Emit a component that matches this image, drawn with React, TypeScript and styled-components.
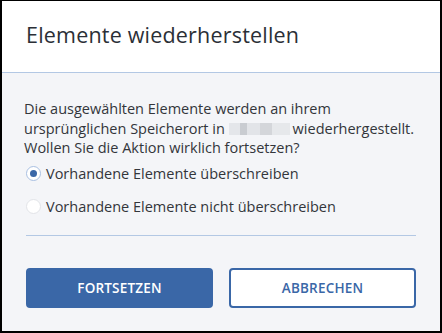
import React from "react";
import styled, { createGlobalStyle } from "styled-components";

const GlobalStyle = createGlobalStyle`
  html, body {
    margin: 0;
    padding: 0;
    background: #ffffff;
  }
  body {
    font-family: "Open Sans", "Noto Sans", sans-serif;
  }
`;

const Dialog = styled.div`
  box-sizing: border-box;
  width: 442px;
  height: 333px;
  border: 2px solid #000000;
  border-top-width: 1px;
  display: flex;
  flex-direction: column;
  background: #f4f5f8;
  overflow: hidden;
`;

const Header = styled.div`
  background: #ffffff;
  height: 72px;
  border-bottom: 1px solid #b3c8e4;
  display: flex;
  align-items: center;
  padding: 0 24px 4px 24px;
  box-sizing: border-box;
  flex-shrink: 0;
`;

const Title = styled.h1`
  margin: 0;
  font-size: 21.5px;
  font-weight: 400;
  color: #2b2f36;
  letter-spacing: 0.2px;
`;

const Body = styled.div`
  padding: 26px 22px 0 22px;
  display: flex;
  flex-direction: column;
`;

const Message = styled.p`
  margin: 0;
  font-size: 14.5px;
  line-height: 19.5px;
  color: #33363b;
`;

const Redacted = styled.span`
  display: inline-block;
  width: 61px;
  height: 12px;
  vertical-align: -1px;
  margin-right: 3px;
  background: linear-gradient(
    90deg,
    #e4e6ea 0 18%,
    #c9ccd1 18% 30%,
    #e2e4e8 30% 50%,
    #d4d6da 50% 70%,
    #e6e8eb 70% 100%
  );
`;

const Options = styled.div`
  display: flex;
  flex-direction: column;
  gap: 13px;
  margin-top: 6px;
`;

const Option = styled.label`
  display: flex;
  align-items: center;
  gap: 5px;
  font-size: 14.5px;
  color: #33363b;
  height: 20px;
  cursor: pointer;
`;

const RadioDot = styled.span<{ $checked?: boolean }>`
  box-sizing: border-box;
  width: 15px;
  height: 15px;
  margin-left: 2px;
  border-radius: 50%;
  background: #ffffff;
  border: 1px solid ${(p) => (p.$checked ? "#a9c0e2" : "#e2e4e8")};
  display: flex;
  align-items: center;
  justify-content: center;
  flex-shrink: 0;
  &::after {
    content: "";
    display: ${(p) => (p.$checked ? "block" : "none")};
    width: 7px;
    height: 7px;
    border-radius: 50%;
    background: #3a67a7;
  }
`;

const Divider = styled.hr`
  border: none;
  border-top: 1px solid #b3c8e4;
  margin: 18px 2px 0 2px;
`;

const Footer = styled.div`
  display: flex;
  gap: 16px;
  padding: 32px 24px 0 24px;
`;

const Button = styled.button<{ $primary?: boolean }>`
  box-sizing: border-box;
  flex: 1;
  height: 40px;
  border-radius: 4px;
  font-family: "Open Sans", "Noto Sans", sans-serif;
  font-size: 13.5px;
  font-weight: 600;
  letter-spacing: 0.2px;
  cursor: pointer;
  border: 2px solid #3a67a7;
  background: ${(p) => (p.$primary ? "#3a67a7" : "#ffffff")};
  color: ${(p) => (p.$primary ? "#ffffff" : "#3a67a7")};
`;

export default function App() {
  return (
    <>
      <GlobalStyle />
      <Dialog>
        <Header>
          <Title>Elemente wiederherstellen</Title>
        </Header>
        <Body>
          <Message>
            Die ausgewählten Elemente werden an ihrem ursprünglichen Speicherort in{" "}
            <Redacted />wiederhergestellt. Wollen Sie die Aktion wirklich fortsetzen?
          </Message>
          <Options>
            <Option>
              <RadioDot $checked />
              Vorhandene Elemente überschreiben
            </Option>
            <Option>
              <RadioDot />
              Vorhandene Elemente nicht überschreiben
            </Option>
          </Options>
          <Divider />
        </Body>
        <Footer>
          <Button $primary>FORTSETZEN</Button>
          <Button>ABBRECHEN</Button>
        </Footer>
      </Dialog>
    </>
  );
}
